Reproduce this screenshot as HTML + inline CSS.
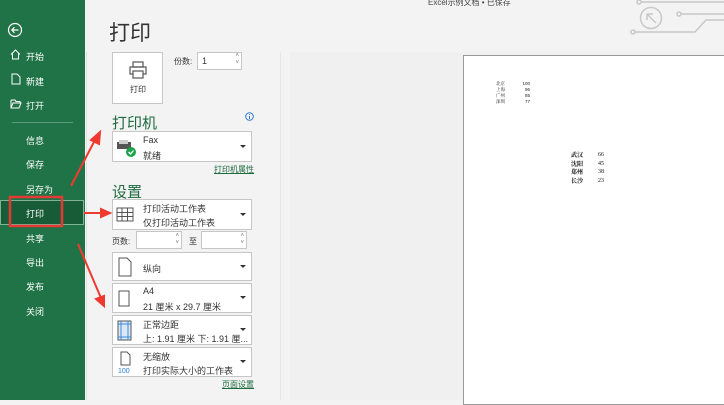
<!DOCTYPE html>
<html><head><meta charset="utf-8"><style>
*{margin:0;padding:0;box-sizing:border-box}
body{width:724px;height:400px;overflow:hidden;background:#f3f3f3;font-family:"Liberation Sans","Noto Sans CJK SC",sans-serif;position:relative;color:#333}
.a{position:absolute}
#side{left:0;top:0;width:85px;height:400px;background:#1f7346}
.si{position:absolute;left:26px;font-size:9px;color:#fff}
.box{position:absolute;left:112px;width:140px;background:#fff;border:1px solid #c6c6c6}
.t1{position:absolute;left:30px;font-size:9px;color:#333}
.dd{position:absolute;right:5px;top:50%;margin-top:-2px;width:0;height:0;border-left:3px solid transparent;border-right:3px solid transparent;border-top:3px solid #333}
.h{position:absolute;left:112px;font-size:15px;color:#1f6b40}
.lnk{position:absolute;font-size:8px;color:#1f6b40;text-decoration:underline}
</style></head><body>
<div class="a" id="side">
<svg class="a" style="left:7px;top:22px" width="16" height="16"><circle cx="8" cy="8" r="6.5" fill="none" stroke="#fff" stroke-width="1.2"/><path d="M11.5 8H5M7.5 5.2L4.8 8l2.7 2.8" fill="none" stroke="#fff" stroke-width="1.2"/></svg>
<svg class="a" style="left:10px;top:49px" width="11" height="11"><path d="M1 5.5L5.5 1 10 5.5M2.5 4.5V10h6V4.5" fill="none" stroke="#fff"/></svg>
<div class="si" style="top:50px">开始</div>
<svg class="a" style="left:11px;top:73px" width="10" height="12"><path d="M1 1h5l3 3v7H1z" fill="none" stroke="#fff"/></svg>
<div class="si" style="top:75px">新建</div>
<svg class="a" style="left:10px;top:99px" width="12" height="10"><path d="M1 1h4l1 1.5h4v2M1 1v8h8l2-5H3L1 9" fill="none" stroke="#fff"/></svg>
<div class="si" style="top:99px">打开</div>
<div class="a" style="left:12px;top:122px;width:61px;height:1px;background:#5f9a7a"></div>
<div class="si" style="top:134px">信息</div>
<div class="si" style="top:158px">保存</div>
<div class="si" style="top:183px">另存为</div>
<div class="a" style="left:0;top:200px;width:84px;height:25px;background:#185c37;border:1px solid #7fb394"></div>
<div class="si" style="top:207px">打印</div>
<div class="si" style="top:232px">共享</div>
<div class="si" style="top:256px">导出</div>
<div class="si" style="top:280px">发布</div>
<div class="si" style="top:305px">关闭</div>
</div>
<div class="a" style="left:86px;top:52px;width:1px;height:348px;background:#e0e0e0"></div>
<div class="a" style="left:280px;top:52px;width:444px;height:348px;background:#f0f0f0"></div>
<div class="a" style="left:280px;top:52px;width:10px;height:348px;background:#f3f3f3;border-left:1px solid #e6e6e6"></div>
<div class="a" style="left:428px;top:-3px;font-size:8px;color:#444">Excel示例文档 • 已保存</div>
<svg class="a" style="left:600px;top:0" width="124" height="50"><g fill="none" stroke="#c8c8c8" stroke-width="1.5"><circle cx="51" cy="18" r="10.5"/><path d="M47 14h6M47 14v6M47 14l9 9"/><circle cx="39" cy="2" r="2"/><path d="M41 2H124"/><circle cx="79" cy="14" r="2"/><path d="M81 14H124"/><circle cx="33" cy="32" r="2"/><path d="M35 32h60l11-12h18"/></g></svg>
<div class="a" style="left:109px;top:17px;font-size:21px;color:#333">打印</div>
<div class="a" style="left:112px;top:52px;width:51px;height:52px;background:#fff;border:1px solid #c6c6c6">
<svg class="a" style="left:15px;top:7px" width="20" height="20"><g fill="none" stroke="#555" stroke-width="1.2"><rect x="5" y="2" width="10" height="5"/><rect x="2" y="7" width="16" height="7"/><rect x="5" y="11" width="10" height="7" fill="#fff"/></g></svg>
<div class="a" style="left:17px;top:31px;font-size:8px;color:#333">打印</div></div>
<div class="a" style="left:174px;top:56px;font-size:8px">份数:</div>
<div class="a" style="left:197px;top:52px;width:45px;height:18px;background:#fff;border:1px solid #c6c6c6;font-size:9px;padding:3px 4px">1<span class="a" style="right:2px;top:0;font-size:6px;color:#777;line-height:7px">˄<br>˅</span></div>
<div class="h" style="top:112px">打印机</div>
<svg class="a" style="left:245px;top:112px" width="9" height="9"><circle cx="4.5" cy="4.5" r="3.8" fill="none" stroke="#2a7bd1"/><path d="M4.5 4v3M4.5 2.3v.8" stroke="#2a7bd1"/></svg>
<div class="box" style="top:131px;height:31px">
<svg class="a" style="left:3px;top:7px" width="22" height="20"><rect x="1" y="3" width="14" height="7" fill="#555"/><rect x="3" y="1" width="9" height="4" fill="#ccc"/><circle cx="15" cy="13" r="5" fill="#1aa34a"/><path d="M12.5 13l2 2 3-3.5" stroke="#fff" fill="none" stroke-width="1.3"/></svg>
<div class="t1" style="top:3px">Fax</div><div class="t1" style="top:17px">就绪</div><div class="dd"></div></div>
<div class="lnk" style="left:214px;top:164px">打印机属性</div>
<div class="h" style="top:181px">设置</div>
<div class="box" style="top:199px;height:31px">
<svg class="a" style="left:3px;top:7px" width="18" height="16"><g fill="none" stroke="#555"><rect x="1" y="1" width="16" height="13"/><path d="M1 5.5h16M1 9.5h16M6 1v13M11.5 1v13"/></g></svg>
<div class="t1" style="top:2px">打印活动工作表</div><div class="t1" style="top:16px">仅打印活动工作表</div><div class="dd"></div></div>
<div class="a" style="left:112px;top:236px;font-size:8px">页数:</div>
<div class="a" style="left:136px;top:231px;width:46px;height:18px;background:#fff;border:1px solid #c6c6c6"><span class="a" style="right:2px;top:1px;font-size:6px;color:#777;line-height:7px">˄<br>˅</span></div>
<div class="a" style="left:189px;top:236px;font-size:8px">至</div>
<div class="a" style="left:201px;top:231px;width:46px;height:18px;background:#fff;border:1px solid #c6c6c6"><span class="a" style="right:2px;top:1px;font-size:6px;color:#777;line-height:7px">˄<br>˅</span></div>
<div class="box" style="top:252px;height:29px">
<svg class="a" style="left:5px;top:4px" width="14" height="20"><path d="M1 1h8l4 4v14H1z" fill="none" stroke="#555"/></svg>
<div class="t1" style="top:9px">纵向</div><div class="dd"></div></div>
<div class="box" style="top:283px;height:30px">
<svg class="a" style="left:5px;top:6px" width="12" height="18"><rect x="1" y="1" width="10" height="15" fill="none" stroke="#555"/></svg>
<div class="t1" style="top:2px">A4</div><div class="t1" style="top:16px">21 厘米 x 29.7 厘米</div><div class="dd"></div></div>
<div class="box" style="top:315px;height:30px">
<svg class="a" style="left:4px;top:4px" width="15" height="21"><rect x="1" y="1" width="13" height="19" fill="#dbe9f7" stroke="#555"/><path d="M4 1v19M11 1v19M1 4h13M1 17h13" stroke="#3b8ad8"/></svg>
<div class="t1" style="top:2px">正常边距</div><div class="t1" style="top:16px">上: 1.91 厘米 下: 1.91 厘...</div><div class="dd"></div></div>
<div class="box" style="top:347px;height:30px">
<svg class="a" style="left:4px;top:3px" width="18" height="24"><path d="M4 1h6l3 3v10H4z" fill="none" stroke="#555"/><text x="1" y="22" font-size="7" fill="#2a7bd1" font-family="Liberation Sans">100</text></svg>
<div class="t1" style="top:2px">无缩放</div><div class="t1" style="top:16px">打印实际大小的工作表</div><div class="dd"></div></div>
<div class="lnk" style="left:222px;top:379px">页面设置</div>
<div class="a" style="left:463px;top:55px;width:270px;height:350px;background:#fff;border:1px solid #999"></div>
<div class="a" style="left:496px;top:81px;font-size:4.5px;line-height:6px;color:#222;font-family:'Noto Serif CJK SC',serif">北京<br>上海<br>广州<br>深圳</div>
<div class="a" style="left:520px;top:81px;font-size:4.5px;line-height:6px;color:#222;text-align:right;width:10px">100<br>96<br>85<br>77</div>
<div class="a" style="left:571px;top:151px;font-size:6px;line-height:8.5px;color:#111;font-weight:bold;font-family:'Noto Serif CJK SC',serif">武汉<br>沈阳<br>郑州<br>长沙</div>
<div class="a" style="left:598px;top:151px;font-size:6px;line-height:8.5px;color:#111;font-family:'Liberation Serif',serif">66<br>45<br>38<br>23</div>
<svg class="a" style="left:0;top:0" width="724" height="400"><g fill="none" stroke="#e53935" stroke-width="2.5"><rect x="10" y="197" width="52" height="29"/></g>
<g stroke="#f03a30" stroke-width="2" fill="#f03a30"><path d="M71 186L95 140"/><path d="M100 132l-1 12-8-4z"/><path d="M84 213H102"/><path d="M110 213l-9-4v8z"/><path d="M78 244L101 298"/><path d="M104 306l-8-7 8-3z"/></g></svg>
</body></html>
